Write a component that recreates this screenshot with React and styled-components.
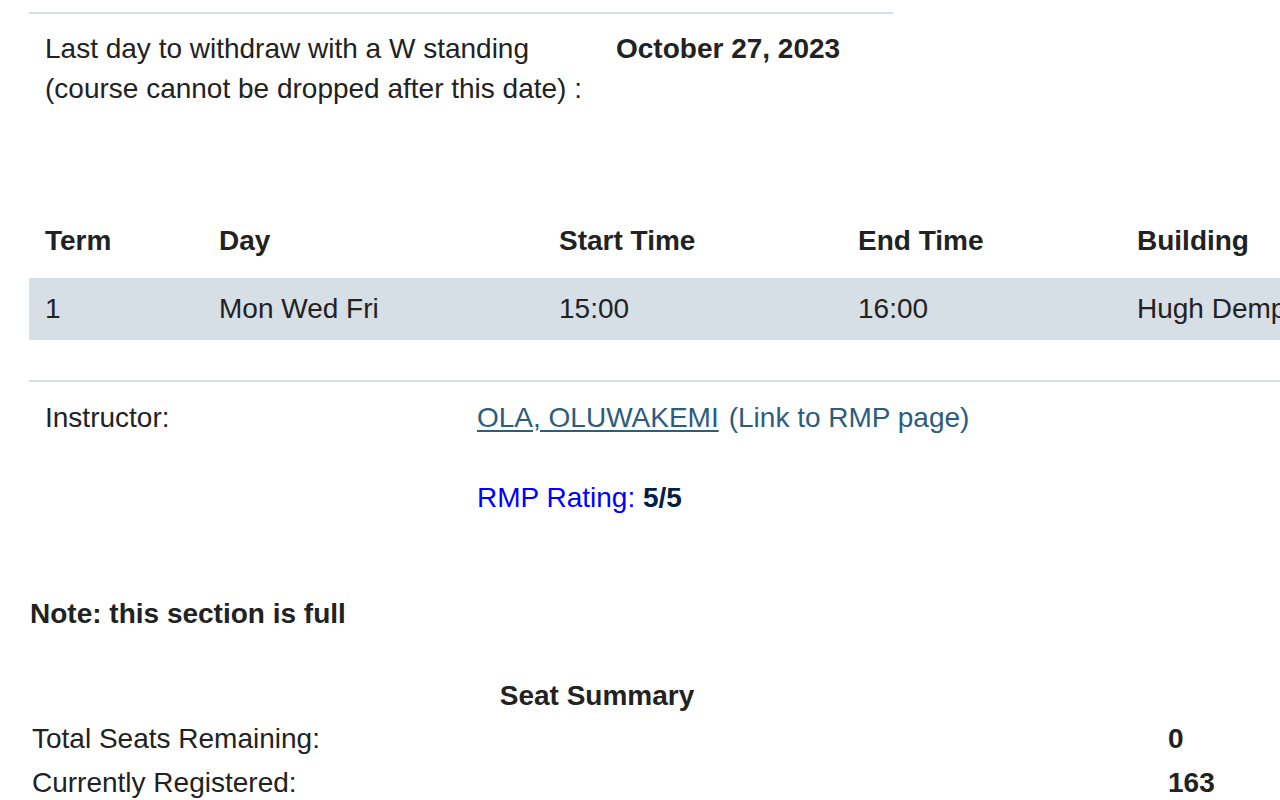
import styled, { createGlobalStyle } from 'styled-components'

const Global = createGlobalStyle`
  html, body {
    margin: 0;
    padding: 0;
    background: #fff;
    overflow: hidden;
  }
  body {
    font-family: "Liberation Sans", Arial, sans-serif;
    font-size: 28px;
    color: #222;
  }
`;

const Page = styled.main`
  padding-left: 29px;
  width: 1400px;
`;

const DateBlock = styled.section`
  width: 864px;
  margin-top: 12px;
  border-top: 2px solid #d6dee6;
  display: grid;
  grid-template-columns: 571px 1fr;
  padding: 15px 0 0 16px;
  box-sizing: border-box;
  line-height: 40px;
`;

const Strong = styled.b`
  font-weight: bold;
`;

const Table = styled.section`
  margin-top: 107px;
  width: 1300px;
`;

const Row = styled.div`
  display: grid;
  grid-template-columns: 174px 340px 299px 279px 1fr;
  padding-left: 16px;
  height: 62px;
  align-items: center;
  background: ${p => p.$shaded ? '#d6dee6' : 'transparent'};
  font-weight: ${p => p.$head ? 'bold' : 'normal'};
  white-space: nowrap;
  overflow: hidden;
  ${p => p.$head && 'padding-bottom: 12px; height: 50px;'}
`;

const Instructor = styled.section`
  margin-top: 40px;
  border-top: 2px solid #d6dee6;
  width: 1300px;
  display: grid;
  grid-template-columns: 432px 1fr;
  padding: 21px 0 0 16px;
  line-height: 30px;
`;

const Link = styled.a`
  color: #2b5d7e;
  text-decoration: underline;
  text-underline-offset: 3px;
`;

const LinkNote = styled.span`
  color: #2b5d7e;
  margin-left: 10px;
`;

const Rating = styled.div`
  grid-column: 2;
  margin-top: 50px;
  color: #0000ff;
`;

const RatingValue = styled.b`
  color: #002145;
`;

const Note = styled.p`
  margin: 86px 0 0 1px;
  font-weight: bold;
  line-height: 30px;
`;

const Seats = styled.section`
  margin-top: 52px;
  width: 1200px;
`;

const Caption = styled.div`
  width: 1136px;
  margin-bottom: 6px;
  text-align: center;
  font-weight: bold;
  line-height: 30px;
`;

const SeatRow = styled.div`
  display: grid;
  grid-template-columns: 1136px 1fr;
  padding-left: 3px;
  line-height: 44px;
`;

export default function App() {
  return (
    <Page>
      <Global />
      <DateBlock>
        <div>
          Last day to withdraw with a W standing<br />
          (course cannot be dropped after this date) :
        </div>
        <Strong>October 27, 2023</Strong>
      </DateBlock>

      <Table>
        <Row $head>
          <span>Term</span>
          <span>Day</span>
          <span>Start Time</span>
          <span>End Time</span>
          <span>Building</span>
        </Row>
        <Row $shaded>
          <span>1</span>
          <span>Mon Wed Fri</span>
          <span>15:00</span>
          <span>16:00</span>
          <span>Hugh Dempster Pavilion</span>
        </Row>
      </Table>

      <Instructor>
        <span>Instructor:</span>
        <span>
          <Link href="#">OLA, OLUWAKEMI</Link>
          <LinkNote>(Link to RMP page)</LinkNote>
        </span>
        <Rating>
          RMP Rating: <RatingValue>5/5</RatingValue>
        </Rating>
      </Instructor>

      <Note>Note: this section is full</Note>

      <Seats>
        <Caption>Seat Summary</Caption>
        <SeatRow>
          <span>Total Seats Remaining:</span>
          <Strong>0</Strong>
        </SeatRow>
        <SeatRow>
          <span>Currently Registered:</span>
          <Strong>163</Strong>
        </SeatRow>
      </Seats>
    </Page>
  )
}
